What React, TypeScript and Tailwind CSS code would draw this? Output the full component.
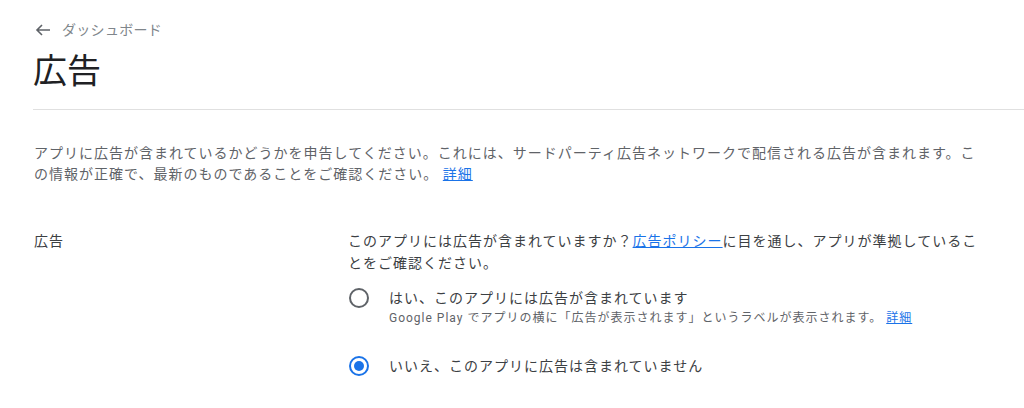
import React from "react";

const font = { fontFamily: 'Roboto, "Noto Sans CJK JP", sans-serif' };

function Radio({ checked }: { checked?: boolean }) {
    return checked ? (
        <span className="ml-px flex h-5 w-5 shrink-0 items-center justify-center rounded-full border-2 border-[#1a73e8]">
            <span className="h-[10px] w-[10px] rounded-full bg-[#1a73e8]" />
        </span>
    ) : (
        <span className="ml-px h-5 w-5 shrink-0 rounded-full border-2 border-[#5f6368]" />
    );
}

export default function App() {
    return (
        <div className="min-h-[408px] bg-white" style={font}>
            {/* Header */}
            <div className="pl-[33px] pt-5">
                <div className="flex h-5 items-center gap-[11px] text-[14px] tracking-[0.3px] text-[#80868b]">
                    <svg width="16" height="16" viewBox="0 0 16 16" fill="none" stroke="#5f6368" strokeWidth="1.6" className="ml-[2px]">
                        <path d="M15 8H2M7 3L2 8l5 5" />
                    </svg>
                    <span>ダッシュボード</span>
                </div>
                <h1 className="mt-[11px] text-[34px] leading-[40px] text-[#202124]">広告</h1>
                <div className="mt-[18px] h-px bg-[#e0e0e0]" />
            </div>

            {/* Content */}
            <div className="px-[34px] pt-[33px]">
                <p className="text-[14px] leading-[20.5px] tracking-[1px] text-[#5f6368]">
                    アプリに広告が含まれているかどうかを申告してください。これには、サードパーティ広告ネットワークで配信される広告が含まれます。この情報が正確で、最新のものであることをご確認ください。{" "}
                    <a className="text-[#1a73e8] underline">詳細</a>
                </p>

                <div className="mt-[47px] flex">
                    <div className="w-[314px] shrink-0 text-[14px] leading-[21px] tracking-[1px] text-[#3c4043]">広告</div>
                    <div className="flex-1">
                        <p className="text-[14px] leading-[21.5px] tracking-[1px] text-[#3c4043]">
                            このアプリには広告が含まれていますか？<a className="text-[#1a73e8] underline">広告ポリシー</a>に目を通し、アプリが準拠していることをご確認ください。
                        </p>

                        <div className="mt-[14px] flex gap-5">
                            <div className="flex h-5 items-center">
                                <Radio />
                            </div>
                            <div>
                                <div className="text-[14px] leading-5 tracking-[1px] text-[#3c4043]">はい、このアプリには広告が含まれています</div>
                                <div className="text-[12px] leading-5 tracking-[1px] text-[#5f6368]">
                                    Google Play でアプリの横に「広告が表示されます」というラベルが表示されます。{" "}
                                    <a className="text-[#1a73e8] underline">詳細</a>
                                </div>
                            </div>
                        </div>

                        <div className="mt-[28px] flex gap-5">
                            <div className="flex h-5 items-center">
                                <Radio checked />
                            </div>
                            <div className="text-[14px] leading-5 tracking-[1px] text-[#3c4043]">いいえ、このアプリに広告は含まれていません</div>
                        </div>
                    </div>
                </div>
            </div>
        </div>
    );
}
